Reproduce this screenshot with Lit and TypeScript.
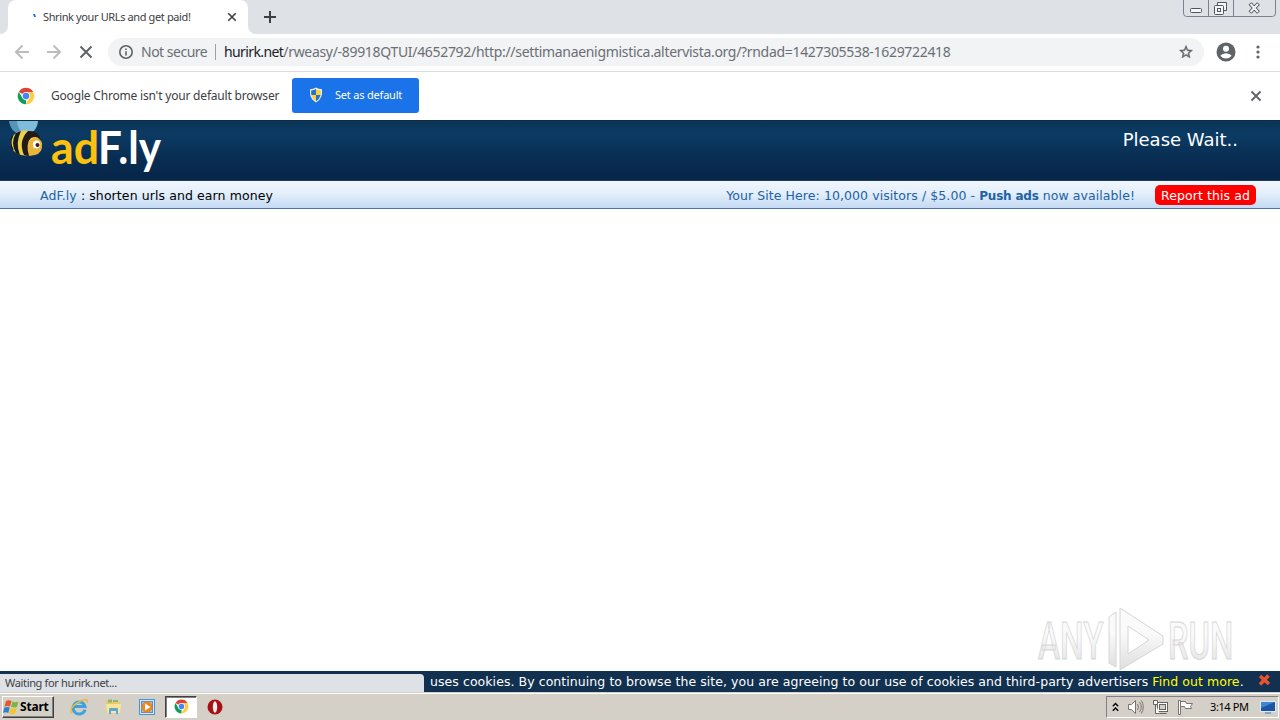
import { css, html, LitElement, svg } from 'lit';
import { customElement } from 'lit/decorators.js';

const chromeIcon = (size: number) => html`
  <svg class="icon" width=${size} height=${size} viewBox="0 0 48 48">
    <circle cx="24" cy="24" r="22" fill="#fff" />
    <path d="M24 24 4.9 13A22 22 0 0 1 43.1 13L24 13z" fill="#db4437" />
    <path d="M4.9 13 14.5 29.5 24 35 24 46A22 22 0 0 1 4.9 13z" fill="#0f9d58" />
    <path d="M43.1 13A22 22 0 0 1 23 46L33.5 29.5 33 19 24 13z" fill="#ffcd40" />
    <circle cx="24" cy="24" r="11" fill="#f1f1f1" />
    <circle cx="24" cy="24" r="8.5" fill="#4285f4" />
  </svg>
`;

const cross = (size: number, color: string, width = 2) => html`
  <svg class="icon" width=${size} height=${size} viewBox="0 0 12 12">
    <path d="M1.5 1.5 10.5 10.5M10.5 1.5 1.5 10.5" stroke=${color} stroke-width=${width} />
  </svg>
`;

/** Browser frame: tab strip, toolbar and the default-browser infobar. */
@customElement('browser-frame')
export class BrowserFrame extends LitElement {
  static override styles = css`
    :host {
      display: block;
      height: 120px;
      font-family: 'Noto Sans', 'Open Sans', sans-serif;
      color: #3c4043;
      background: #fff;
      white-space: nowrap;
    }

    .icon {
      display: block;
      flex: none;
    }

    .strip {
      display: flex;
      height: 34px;
      background: #dee1e6;
      align-items: flex-start;
    }

    .edge {
      width: 8px;
      height: 34px;
      background: linear-gradient(#dee1e6 50%, #fff 50%);
    }

    .edge i {
      display: block;
      height: 34px;
      background: #dee1e6;
    }

    .edge.before i {
      border-bottom-right-radius: 8px;
    }

    .edge.after i {
      border-bottom-left-radius: 8px;
    }

    .tab {
      box-sizing: border-box;
      display: flex;
      align-items: center;
      width: 240px;
      height: 34px;
      padding: 0 11px 0 25px;
      background: #fff;
      border-radius: 8px 8px 0 0;
      font-size: 11px;
    }

    .title {
      flex: 1;
      padding: 0 0 2px 7px;
      letter-spacing: -0.38px;
    }

    .plus {
      padding: 11px 0 0 8px;
    }

    .buttons {
      display: flex;
      margin-left: auto;
      margin-right: 4px;
    }

    .toolbar {
      box-sizing: border-box;
      display: flex;
      align-items: center;
      height: 38px;
      padding: 0 13px 2px 14px;
      border-bottom: 1px solid #dadce0;
    }

    .nav {
      display: flex;
      gap: 16px;
      width: 94px;
    }

    .omnibox {
      box-sizing: border-box;
      display: flex;
      align-items: center;
      width: 1096px;
      height: 28px;
      padding: 0 10px;
      border-radius: 14px;
      background: #f1f3f4;
      font-size: 14px;
      color: #6b6f74;
    }

    .secure {
      box-sizing: border-box;
      flex: none;
      width: 81px;
      padding-left: 7px;
      letter-spacing: -0.5px;
    }

    .bar {
      width: 1px;
      height: 16px;
      margin-right: 8px;
      background: #9aa0a6;
    }

    .url {
      flex: 1;
      letter-spacing: -0.345px;
    }

    .url b {
      font-weight: 400;
      letter-spacing: -0.6px;
      color: #202124;
    }

    .url i {
      font-style: normal;
      letter-spacing: -0.315px;
    }

    .right {
      display: flex;
      align-items: center;
      gap: 13px;
      padding-left: 12px;
    }

    .infobar {
      display: flex;
      align-items: center;
      height: 48px;
      padding: 0 18px 0 17px;
      font-size: 12px;
    }

    .message {
      box-sizing: border-box;
      flex: none;
      width: 257px;
      padding: 0 0 2px 16px;
      letter-spacing: -0.19px;
    }

    .default {
      display: flex;
      align-items: center;
      box-sizing: border-box;
      gap: 12px;
      width: 127px;
      height: 35px;
      margin-bottom: 2px;
      padding-left: 17px;
      border-radius: 3px;
      background: #1a73e8;
      color: #fff;
      font-size: 11px;
      letter-spacing: -0.2px;
    }

    .default span {
      padding-bottom: 2px;
    }

    .dismiss {
      margin-left: auto;
    }
  `;

  override render() {
    return html`
      <div class="strip">
        <div class="edge before"><i></i></div>
        <div class="tab">
          <svg class="icon" width="3" height="6"><path d="M0 0h2l1 3-2 0z" fill="#1a73e8" /></svg>
          <span class="title">Shrink your URLs and get paid!</span>
          ${cross(10, '#3c4043', 1.9)}
        </div>
        <div class="edge after"><i></i></div>
        <div class="plus">
          <svg class="icon" width="12" height="12"><path d="M6 0v12M0 6h12" stroke="#3c4043" stroke-width="2" /></svg>
        </div>
        <div class="buttons">
          <svg class="icon" width="93" height="17" fill="none" stroke="#7c828d">
            <path d="M.5 0v13q0 3.500 3 3.500h86q3 0 3-3.500V0M25.500 0v16M50.500 0v16" />
            <g stroke="#50555e">
              <rect x="7.500" y="8.500" width="11" height="4" rx="1" fill="#f5f6f8" />
              <path d="M34.500 5V2.500h9v8H41" fill="#f5f6f8" />
              <rect x="31.500" y="5.500" width="9" height="9" rx="1" fill="#f5f6f8" />
              <rect x="34.500" y="8.500" width="3" height="3" />
            </g>
            <path d="M67 3.500 75.500 12.500M75.500 3.500 67 12.500" stroke="#50555e" stroke-width="4" />
            <path d="M67.500 4 75 12M75 4 67.500 12" stroke="#f5f6f8" stroke-width="2" />
          </svg>
        </div>
      </div>
      <div class="toolbar">
        <div class="nav">
          <svg class="icon" width="16" height="16" fill="none" stroke="#babcbe" stroke-width="2">
            <path d="M15 8H2M8.500 1.500 2 8l6.500 6.500" />
          </svg>
          <svg class="icon" width="16" height="16" fill="none" stroke="#babcbe" stroke-width="2">
            <path d="M1 8h13M7.500 1.500 14 8l-6.500 6.500" />
          </svg>
          <svg class="icon" width="16" height="16" stroke="#5f6368" stroke-width="2">
            <path d="M2.500 2.500l11 11M13.500 2.500l-11 11" />
          </svg>
        </div>
        <div class="omnibox">
          <svg class="icon" width="16" height="16" fill="none" stroke="#5f6368">
            <circle cx="8" cy="8" r="6.200" stroke-width="1.600" />
            <path d="M8 4.500v1.600M8 7.200v4.300" stroke-width="1.600" />
          </svg>
          <span class="secure">Not secure</span>
          <span class="bar"></span>
          <span class="url"
            ><b>hurirk.net</b
            ><i>/rweasy/-89918QTUI/4652792/http://settimanaenigmistica.altervista.org/?rndad=1427305538-1629722418</i></span
          >
          <svg class="icon" width="16" height="16" viewBox="0 0 24 24" fill="#5f6368" stroke="#5f6368" stroke-width=".6">
            <path
              d="M22 9.240l-7.190-.62L12 2 9.190 8.630 2 9.240l5.460 4.730L5.820 21 12 17.270 18.180 21l-1.630-7.030L22 9.240zM12 15.400l-3.760 2.270 1-4.280-3.320-2.880 4.380-.38L12 6.100l1.710 4.040 4.380.38-3.320 2.880 1 4.280L12 15.400z"
            />
          </svg>
        </div>
        <div class="right">
          <svg class="icon" width="20" height="20" viewBox="0 0 20 20">
            <circle cx="10" cy="10" r="9.500" fill="#5f6368" />
            <circle cx="10" cy="6.800" r="3" fill="#fff" />
            <path d="M4.300 13.800q1.900-2.600 5.700-2.600t5.700 2.600q-2.100 2.800-5.700 2.800t-5.700-2.800z" fill="#fff" />
          </svg>
          <svg class="icon" width="18" height="16" fill="#5f6368">
            <circle cx="9" cy="3" r="1.600" />
            <circle cx="9" cy="8" r="1.600" />
            <circle cx="9" cy="13" r="1.600" />
          </svg>
        </div>
      </div>
      <div class="infobar">
        ${chromeIcon(18)}
        <span class="message">Google Chrome isn't your default browser</span>
        <span class="default">
          <svg class="icon" width="14" height="16" viewBox="0 0 14 16">
            <path d="M7 .5Q4.500 2.200 1 2.200 0 12 7 15.500 14 12 13 2.200 9.500 2.200 7 .5z" fill="#e8edf2" />
            <path d="M7 2Q5 3.200 2.200 3.400 2 6 2.400 8H7z" fill="#2a6fd0" />
            <path d="M7 2Q9 3.200 11.800 3.400 12 6 11.600 8H7z" fill="#fbd434" />
            <path d="M7 14.200Q3.300 12 2.400 8H7z" fill="#fbd434" />
            <path d="M7 14.200Q10.700 12 11.600 8H7z" fill="#2a6fd0" />
          </svg>
          <span>Set as default</span>
        </span>
        <span class="dismiss">${cross(12, '#5f6368', 1.9)}</span>
      </div>
    `;
  }
}

/** The interstitial page with its banner, sub bar and cookie notice. */
@customElement('adfly-page')
export class AdflyPage extends LitElement {
  static override styles = css`
    :host {
      display: flex;
      flex-direction: column;
      position: relative;
      height: 572px;
      background: #fff;
      font-family: 'DejaVu Sans', Verdana, sans-serif;
      font-size: 12.5px;
      white-space: nowrap;
    }

    header {
      box-sizing: border-box;
      display: flex;
      justify-content: space-between;
      height: 61px;
      padding-left: 8px;
      padding-right: 42px;
      border-top: 1px solid #102b40;
      border-bottom: 1px solid #1c3c58;
      background: linear-gradient(#0b3558, #0b3a63 25%, #0a3055 55%, #06274a 90%);
    }

    .logo {
      overflow: visible;
      font-family: Lato, sans-serif;
      font-size: 46px;
      font-weight: 700;
    }

    .wait {
      padding-top: 8px;
      color: #fff;
      font-size: 18px;
      line-height: 22px;
    }

    .sub {
      box-sizing: border-box;
      display: flex;
      align-items: center;
      height: 28px;
      padding: 1px 24px 0 40px;
      border-bottom: 1px solid #4a74b0;
      background: linear-gradient(#f0f6fd, #e4effb 45%, #c4daf4);
      color: #000;
      letter-spacing: 0.09px;
    }

    .sub a {
      color: #2262a4;
    }

    .offer {
      margin-left: auto;
      margin-right: 20px;
      color: #2262a4;
      letter-spacing: 0.08px;
    }

    .offer b {
      font-size: 12px;
      letter-spacing: -0.2px;
    }

    .report {
      box-sizing: border-box;
      width: 101px;
      height: 20px;
      margin-bottom: 1px;
      padding-left: 6px;
      border-radius: 5px;
      background: #fe0000;
      color: #fff;
      line-height: 22px;
    }

    .cookies {
      display: flex;
      align-items: center;
      height: 21px;
      margin-top: auto;
      padding: 0 9px 0 430px;
      background: #12304f;
      color: #fff;
      letter-spacing: 0.066px;
    }

    .cookies a {
      color: #ff0;
    }

    .cookies .icon {
      margin: 0 0 3px auto;
    }

    .status {
      position: absolute;
      left: 0;
      bottom: 0;
      box-sizing: border-box;
      width: 424px;
      height: 18px;
      padding-left: 5px;
      border-top-right-radius: 4px;
      background: #dee1e6;
      color: #3c4043;
      font: 11px/18px 'Noto Sans', sans-serif;
      letter-spacing: -0.34px;
    }

    .watermark {
      position: absolute;
      left: 1034px;
      top: 486px;
      overflow: visible;
      font-family: Roboto, sans-serif;
      font-size: 52px;
      font-weight: 500;
    }
  `;

  private renderLogo() {
    return svg`
      <path d="M1 0H14L18 14Q3 14 1 0z" fill="#5795b8" />
      <path d="M9 0H30Q29 12 17 14 10 10 9 0z" fill="#7fbbdb" />
      <ellipse cx="17" cy="22" rx="14.500" ry="12.500" fill="#ecd14a" />
      <path d="M8 12Q2 22 8 32L12 34Q7 22 13 10z" fill="#171a20" />
      <path d="M4.500 15Q1 22 5 29" stroke="#171a20" stroke-width="1.500" fill="none" />
      <path d="M20 10Q10 20 16 34L22 35Q17 22 23 17 29 14 33 19 30 9 20 10z" fill="#241b16" />
      <path d="M21 35Q17 23 24 18 31 15 34 22 35 32 27 34z" fill="#e9b53a" />
      <ellipse cx="28.500" cy="23.500" rx="3.600" ry="4" fill="#fff" />
      <circle cx="29.500" cy="24" r="2" fill="#471717" />
      <text x="43" y="43" fill="#fcc20f" textLength="48" lengthAdjust="spacingAndGlyphs">ad</text>
      <text x="90" y="43" fill="#fff" textLength="63" lengthAdjust="spacingAndGlyphs">F.ly</text>
    `;
  }

  override render() {
    return html`
      <header>
        <svg class="logo" width="160" height="59">${this.renderLogo()}</svg>
        <span class="wait">Please Wait..</span>
      </header>
      <div class="sub">
        <span><a>AdF.ly</a> : shorten urls and earn money</span>
        <span class="offer">Your Site Here: 10,000 visitors / $5.00 - <b>Push ads</b> now available!</span>
        <span class="report">Report this ad</span>
      </div>
      <div class="cookies">
        <span class="notice"
          >uses cookies. By continuing to browse the site, you are agreeing to our use of cookies and third-party
          advertisers <a>Find out more</a>.</span
        >
        <svg class="icon" width="13" height="12">
          <path d="M2 2 11 10M10.500 1.500 2 10.500" stroke="#e8532e" stroke-width="3.500" />
        </svg>
      </div>
      <div class="status">Waiting for hurirk.net...</div>
      <svg class="watermark" width="240" height="66">
        <defs>
          <linearGradient id="fade" x2="0" y2="1">
            <stop offset=".4" stop-color="#fafafa" />
            <stop offset="1" stop-color="#dedede" />
          </linearGradient>
        </defs>
        <g fill="url(#fade)" stroke="#d6d6d6">
          <text transform="translate(4 53) scale(.64 1)">ANY</text>
          <text transform="translate(134 53) scale(.63 1)">RUN</text>
          <path d="M75 11 82 6V61L75 57zM86 2 129 30V38L86 64zM94 20V48L115 34z" fill-rule="evenodd" />
        </g>
      </svg>
    `;
  }
}

/** Classic-theme Windows 7 taskbar. */
@customElement('task-bar')
export class TaskBar extends LitElement {
  static override styles = css`
    :host {
      box-sizing: border-box;
      display: flex;
      align-items: center;
      height: 28px;
      padding: 2px 1px 2px 2px;
      border-top: 1px solid #d4d0c8;
      box-shadow: inset 0 1px #fff;
      background: #d4d0c8;
      color: #000;
      font-family: 'Noto Sans', sans-serif;
      font-size: 11px;
      white-space: nowrap;
    }

    .icon {
      display: block;
      flex: none;
    }

    .start {
      box-sizing: border-box;
      display: flex;
      align-items: center;
      width: 52px;
      height: 22px;
      border: 1px solid;
      border-color: #fff #404040 #404040 #fff;
      box-shadow: inset -1px -1px #808080;
      font-size: 12px;
      font-weight: 700;
      letter-spacing: -0.2px;
    }

    .apps {
      display: flex;
      align-items: center;
      padding-left: 8px;
    }

    .app {
      box-sizing: border-box;
      display: flex;
      align-items: center;
      justify-content: center;
      width: 34px;
      height: 22px;
    }

    .app.active {
      width: 32px;
      margin: 0 1px;
      border: 1px solid;
      border-color: #404040 #fff #fff #404040;
      background: #fff;
      box-shadow: inset 1px 1px #808080;
    }

    .tray {
      box-sizing: border-box;
      display: flex;
      align-items: center;
      gap: 8px;
      width: 173px;
      height: 22px;
      margin-left: auto;
      padding-left: 5px;
      border: 1px solid;
      border-color: #808080 #fff #fff #808080;
    }

    .clock {
      box-sizing: border-box;
      width: 50px;
      padding-left: 8px;
      letter-spacing: -0.4px;
    }
  `;

  override render() {
    return html`
      <div class="start">
        <svg class="icon" width="17" height="16">
          <path d="M3 2Q6 .5 8.500 2L7 7.500Q4.500 6.500 1.500 7.500z" fill="#e8562a" />
          <path d="M9.500 2.500Q12 4 15.500 2.500L14 8Q11 9 8 7.800z" fill="#7cb83f" />
          <path d="M1.300 8.500Q4 7.500 6.700 8.500L5.300 14Q2.500 12.500 0 14z" fill="#2e7fd0" />
          <path d="M7.700 9Q11 10.500 13.800 9L12.200 14.500Q9 16 6.200 14.500z" fill="#f7c52b" />
        </svg>
        Start
      </div>
      <div class="apps">
        <span class="app">
          <svg class="icon" width="18" height="18" fill="none">
            <path d="M15 11.500A6 6 0 1 1 15 8.500H4.500" stroke="#3fa2df" stroke-width="3" />
            <path d="M1.500 15.500Q-1 9 9 4T17 4.500" stroke="#e8b93a" stroke-width="1.500" />
          </svg>
        </span>
        <span class="app">
          <svg class="icon" width="17" height="17">
            <path d="M1 3h5l1 1h8v11H1z" fill="#e9c964" />
            <path d="M3 1.500h4v3H3zM8 2h5v2H8z" fill="#8fb573" />
            <path d="M1 6h15l-1 9H2z" fill="#f8e59c" />
            <path d="M4 16v-5q0-1 1-1h7q1 0 1 1v5h-2v-3H6v3z" fill="#5fa6d6" />
          </svg>
        </span>
        <span class="app">
          <svg class="icon" width="16" height="16">
            <rect x=".5" y=".5" width="15" height="15" fill="#d7e9f8" stroke="#4d93cd" />
            <rect x="2.500" y="2.500" width="11" height="11" fill="#9bc4e6" stroke="#4d93cd" />
            <circle cx="8" cy="8" r="5.500" fill="#f08519" />
            <path d="M6 4.500v7L11.500 8z" fill="#fff" />
          </svg>
        </span>
        <span class="app active">${chromeIcon(15)}</span>
        <span class="app">
          <svg class="icon" width="16" height="16">
            <ellipse cx="8" cy="8" rx="7.500" ry="7.500" fill="#a81113" />
            <ellipse cx="8" cy="8" rx="2.200" ry="5.800" fill="#f7eeee" />
          </svg>
        </span>
      </div>
      <div class="tray">
        <svg class="icon" width="7" height="10" fill="none" stroke="#000" stroke-width="1.400">
          <path d="M.8 4.200 3.500 1.500 6.200 4.200M.8 8.700 3.500 6 6.200 8.700" />
        </svg>
        <svg class="icon" width="17" height="16" fill="none" stroke="#77756f">
          <path d="M1.500 5.500h3l4-4v13l-4-4h-3z" fill="#fff" />
          <path d="M10.500 5q2 3 0 6M12.500 3q3.500 5 0 10M14.500 1.500q3.500 6.500 0 13" />
        </svg>
        <svg class="icon" width="17" height="16" fill="#fff" stroke="#66645f">
          <rect x="5.500" y="3.500" width="10" height="9" />
          <rect x="7.500" y="5.500" width="6" height="5" fill="#d4d0c8" />
          <path d="M7.500 14.500h7M1.500 1.500h4v4h-4zM3.500 5.500v9h4" />
        </svg>
        <svg class="icon" width="17" height="16" fill="#fff" stroke="#77756f">
          <path d="M1.500 1.500h2v14h-2zM3.500 2.500h5l1 2h6l-2 3 1 2h-6l-1-2h-4z" />
        </svg>
        <span class="clock">3:14 PM</span>
        <svg class="icon" width="16" height="16">
          <rect x=".5" y="2.500" width="15" height="10" fill="#1b55a6" stroke="#dfe9f4" />
          <path d="M1 3h14L1 9z" fill="#3f86d0" />
          <path d="M5 13h6v2H5z" fill="#8ba3ba" />
        </svg>
      </div>
    `;
  }
}

@customElement('app-root')
export class AppRoot extends LitElement {
  static override styles = css`
    :host {
      display: flex;
      flex-direction: column;
      width: 1280px;
      height: 720px;
      overflow: hidden;
    }
  `;

  override render() {
    return html`
      <browser-frame></browser-frame>
      <adfly-page></adfly-page>
      <task-bar></task-bar>
    `;
  }
}
